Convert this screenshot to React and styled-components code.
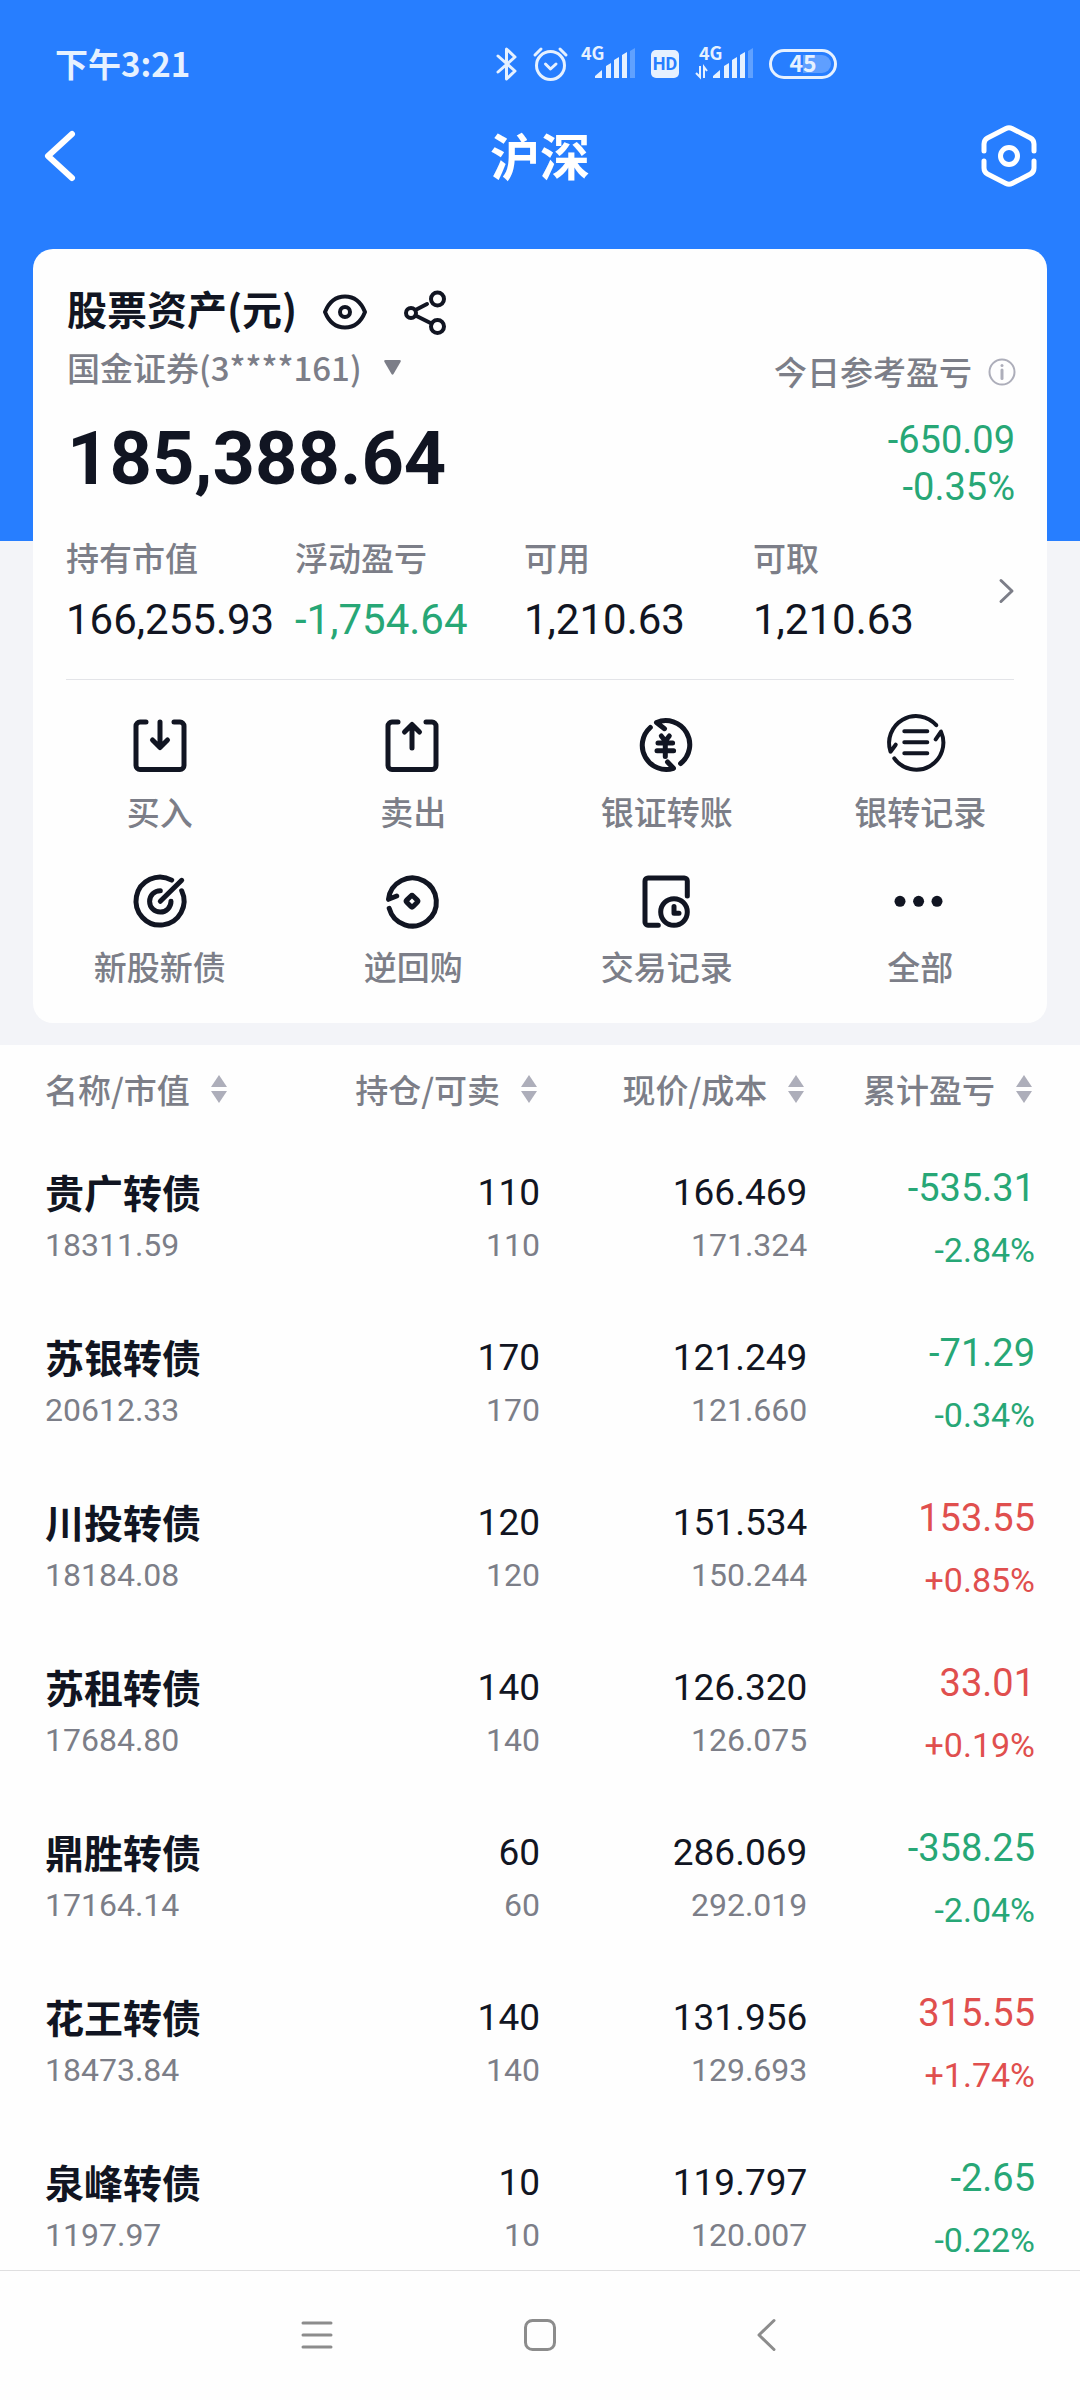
import React from "react";
import styled, { createGlobalStyle } from "styled-components";

const GlobalStyle = createGlobalStyle`
  * {
    box-sizing: border-box;
  }

  body {
    margin: 0;
    background: #fefefe;
    color: #111522;
    font-family: "Noto Sans CJK SC", sans-serif;
    font-size: 33px;
  }

  button,
  select {
    margin: 0;
    padding: 0;
    border: none;
    background: none;
    color: inherit;
    font: inherit;
  }

  svg {
    display: block;
    flex: none;
    overflow: visible;
  }
`;

const tones = {
  up: "#e04f4e",
  down: "#27a776",
  dark: "#111522",
  grey: "#7c7e88",
};

const Page = styled.div`
  display: flex;
  flex-direction: column;
  height: 100vh;
`;

const Top = styled.header`
  padding-bottom: 22px;
  background: linear-gradient(#277eff 541px, #f3f4f8 541px);
`;

const StatusBar = styled.div`
  display: flex;
  justify-content: space-between;
  align-items: center;
  height: 126px;
  padding: 0 243px 0 55px;
  color: #e6f1ff;
`;

const Clock = styled.span`
  font-size: 33px;
  font-weight: 700;
`;

const StatusIcons = styled.div`
  display: flex;
  align-items: center;
  gap: 16px;
  padding-top: 2px;
`;

const TitleBar = styled.div`
  display: flex;
  justify-content: space-between;
  align-items: center;
  height: 60px;
  padding: 0 43px;
  margin-bottom: 63px;
  color: #fff;
`;

const Title = styled.h1`
  margin: 0;
  padding-bottom: 4px;
  font-size: 50px;
  font-weight: 700;
  line-height: 60px;
`;

const TitleButton = styled.button`
  display: flex;
  justify-content: ${(props) => (props.$end ? "flex-end" : "flex-start")};
  width: 60px;
`;

const Card = styled.section`
  margin: 0 33px;
  border-radius: 20px;
  background: #fefefe;
`;

const Overview = styled.div`
  display: flex;
  justify-content: space-between;
  align-items: flex-end;
  padding: 34px 32px 0 34px;
`;

const Assets = styled.div`
  padding-bottom: 12px;
`;

const AssetsHead = styled.div`
  display: flex;
  align-items: center;
  height: 54px;
  gap: 26px;
`;

const AssetsTitle = styled.h2`
  margin: 0;
  padding-bottom: 4px;
  font-size: 40px;
  font-weight: 700;
  line-height: 50px;
`;

const IconButton = styled.button`
  display: flex;
  margin-right: 10px;
`;

const Account = styled.label`
  display: flex;
  align-items: center;
  gap: 22px;
  margin-top: 8px;
  color: ${tones.grey};
`;

const AccountSelect = styled.select`
  appearance: none;
  height: 44px;
  font-weight: 500;
  line-height: 44px;
`;

const Total = styled.div`
  margin-top: 30px;
  font-family: Roboto, sans-serif;
  font-size: 74px;
  font-weight: 700;
  line-height: 80px;
`;

const Today = styled.div`
  display: flex;
  flex-direction: column;
  align-items: flex-end;
`;

const TodayLabel = styled.div`
  display: flex;
  align-items: center;
  gap: 15px;
  margin-bottom: 26px;
  color: ${tones.grey};
  font-weight: 500;
  line-height: 40px;
`;

const TodayValue = styled.div`
  color: ${tones.down};
  font-family: Roboto, sans-serif;
  font-size: 38px;
  line-height: 47px;
`;

const Metrics = styled.div`
  display: flex;
  align-items: center;
  margin: 26px 33px 0;
  padding-bottom: 34px;
  border-bottom: 1px solid #e3e4e8;
`;

const MetricList = styled.dl`
  display: grid;
  grid-template-columns: repeat(4, 1fr);
  flex: 1;
  margin: 0;
`;

const MetricLabel = styled.dt`
  margin-bottom: 18px;
  color: ${tones.grey};
  font-weight: 500;
  line-height: 40px;
`;

const MetricValue = styled.dd`
  margin: 0;
  color: ${(props) => tones[props.$tone]};
  font-family: Roboto, sans-serif;
  font-size: 42px;
  line-height: 50px;
`;

const Actions = styled.nav`
  display: grid;
  grid-template-columns: repeat(4, 1fr);
  row-gap: 40px;
  padding: 36px 0 37px;
`;

const Action = styled.button`
  display: flex;
  flex-direction: column;
  align-items: center;
  gap: 15px;
  color: ${tones.dark};
`;

const ActionLabel = styled.span`
  color: ${tones.grey};
  font-weight: 500;
  line-height: 40px;
`;

const Holdings = styled.main`
  flex: 1;
  min-height: 0;
  overflow: hidden auto;
  padding: 0 45px;
  scrollbar-width: none;
`;

const Table = styled.table`
  width: 100%;
  table-layout: fixed;
  border-collapse: collapse;
`;

const HeadCell = styled.th`
  width: ${(props) => props.$width};
  height: 91px;
  padding: 0 0 4px;
  color: ${tones.grey};
  font-weight: 500;
  text-align: ${(props) => props.$align};
`;

const SortButton = styled.button`
  display: inline-flex;
  align-items: center;
  gap: 20px;
  line-height: 44px;
  white-space: nowrap;
`;

const Cell = styled.td`
  height: 165px;
  padding: 0;
  text-align: ${(props) => props.$align || "right"};
`;

const Name = styled.div`
  margin-bottom: 4px;
  font-size: 39px;
  font-weight: 700;
  line-height: 48px;
`;

const Main = styled.div`
  color: ${(props) => tones[props.$tone || "dark"]};
  font-family: Roboto, sans-serif;
  font-size: ${(props) => (props.$tone ? "38px" : "37px")};
  line-height: ${(props) => (props.$tone ? "62px" : "52px")};
`;

const Sub = styled.div`
  color: ${(props) => tones[props.$tone || "grey"]};
  font-family: Roboto, sans-serif;
  font-size: ${(props) => (props.$tone ? "34px" : "32px")};
  line-height: ${(props) => (props.$tone ? "62px" : "52px")};
`;

const SystemNav = styled.nav`
  display: flex;
  justify-content: center;
  height: 130px;
  padding-bottom: 2px;
  border-top: 1px solid #dfdfe0;
  color: #8c8c8c;
`;

const SystemButton = styled.button`
  display: flex;
  justify-content: center;
  align-items: center;
  width: 225px;
`;

const metrics = [
  { label: "持有市值", value: "166,255.93", tone: "dark" },
  { label: "浮动盈亏", value: "-1,754.64", tone: "down" },
  { label: "可用", value: "1,210.63", tone: "dark" },
  { label: "可取", value: "1,210.63", tone: "dark" },
];

const actions = [
  {
    label: "买入",
    icon: (
      <>
        <path d="M16 6H10a4 4 0 0 0-4 4V49.500a4 4 0 0 0 4 4H50a4 4 0 0 0 4-4V10a4 4 0 0 0-4-4H44" />
        <path d="M30 6V31M22.500 24 30 31.500 37.500 24" />
      </>
    ),
  },
  {
    label: "卖出",
    icon: (
      <>
        <path d="M15 6H9a4 4 0 0 0-4 4V49.500a4 4 0 0 0 4 4H49a4 4 0 0 0 4-4V10a4 4 0 0 0-4-4H43" />
        <path d="M29 32V9M21.500 16 29 8.500 36.500 16" />
      </>
    ),
  },
  {
    label: "银证转账",
    icon: (
      <>
        <path d="M13.300 11.500A24 24 0 0 0 36.500 52.300L30.500 46" />
        <path d="M27.500 12.700 19.500 6.500A24 24 0 0 1 43.600 47.500" />
        <path d="M24.300 20 28.300 25 32.300 20M21 27H35.600M20 34.700H36.600M28.300 25V40.500" />
      </>
    ),
  },
  {
    label: "银转记录",
    icon: (
      <g strokeWidth="4">
        <path d="M46.300 9.200A27 27 0 0 0 .500 35.700L5.700 28.700" />
        <path d="M4.300 42.300A27 27 0 0 0 51 15.700L45.700 23.300" />
        <path d="M14.300 15.300H37.300M14.300 26.300H37.300M14.300 37.300H37.300" />
      </g>
    ),
  },
  {
    label: "新股新债",
    icon: (
      <>
        <path d="M41.700 9.100A24 24 0 1 0 51.700 19.800" />
        <path d="M30.300 19.700A10.700 10.700 0 1 0 41 30.300" />
        <path d="M30.300 30.300 51.700 9.300" />
      </>
    ),
  },
  {
    label: "逆回购",
    icon: (
      <>
        <path d="M13.700 25 5.500 28.300A24 24 0 1 1 6.200 37.300" />
        <rect x="24.500" y="25.700" width="9" height="9" rx="1.500" transform="rotate(45 29 30.200)" />
      </>
    ),
  },
  {
    label: "交易记录",
    icon: (
      <>
        <path d="M21.300 54.200H11a3 3 0 0 1-3-3V10a3 3 0 0 1 3-3H47.300a3 3 0 0 1 3 3V25" />
        <circle cx="37" cy="41" r="13.300" />
        <path d="M37 35.500V42.300H42" />
      </>
    ),
  },
  {
    label: "全部",
    icon: (
      <g fill="currentColor" stroke="none">
        <circle cx="10" cy="30.300" r="5.500" />
        <circle cx="28.600" cy="30.300" r="5.500" />
        <circle cx="47" cy="30.300" r="5.500" />
      </g>
    ),
  },
];

const columns = [
  { label: "名称/市值", width: "25%", align: "left" },
  { label: "持仓/可卖", width: "25%", align: "right" },
  { label: "现价/成本", width: "27%", align: "right" },
  { label: "累计盈亏", width: "23%", align: "right" },
];

const holdings = [
  { name: "贵广转债", value: "18311.59", count: "110", price: "166.469", cost: "171.324", profit: "-535.31", rate: "-2.84%" },
  { name: "苏银转债", value: "20612.33", count: "170", price: "121.249", cost: "121.660", profit: "-71.29", rate: "-0.34%" },
  { name: "川投转债", value: "18184.08", count: "120", price: "151.534", cost: "150.244", profit: "153.55", rate: "+0.85%" },
  { name: "苏租转债", value: "17684.80", count: "140", price: "126.320", cost: "126.075", profit: "33.01", rate: "+0.19%" },
  { name: "鼎胜转债", value: "17164.14", count: "60", price: "286.069", cost: "292.019", profit: "-358.25", rate: "-2.04%" },
  { name: "花王转债", value: "18473.84", count: "140", price: "131.956", cost: "129.693", profit: "315.55", rate: "+1.74%" },
  { name: "泉峰转债", value: "1197.97", count: "10", price: "119.797", cost: "120.007", profit: "-2.65", rate: "-0.22%" },
];

const Line = ({ width, height, stroke = 5, children }) => (
  <svg
    width={width}
    height={height}
    viewBox={`0 0 ${width} ${height}`}
    fill="none"
    stroke="currentColor"
    strokeWidth={stroke}
    strokeLinecap="round"
    strokeLinejoin="round"
    aria-hidden="true"
  >
    {children}
  </svg>
);

// mobile signal: "4G" over five rising bars, the last one dimmed
const Signal = ({ arrows }) => (
  <svg width={arrows ? 58 : 51} height="34" viewBox={arrows ? "-4 0 58 34" : "3 0 51 34"} fill="currentColor">
    <text x="0" y="13" fontFamily="Noto Sans CJK SC" fontSize="18" fontWeight="700">
      4G
    </text>
    <path d="M14 31V29L21 23V31ZM25 31V19L30 16V31ZM33 31V13L38 10V31ZM41 31V8L46 5V31Z" />
    <path d="M49 31V4L54 1V31Z" opacity="0.3" />
    {arrows && (
      <path d="M-3 26 1 30V19M5 31V20L8 24" fill="none" stroke="currentColor" strokeWidth="2" />
    )}
  </svg>
);

const SortIcon = () => (
  <svg width="20" height="28" viewBox="0 0 20 28" fill="#adaeba" aria-hidden="true">
    <path d="M9 0 17 12H1Z" />
    <path d="M1 16H17L9 28Z" />
  </svg>
);

function Status() {
  return (
    <StatusBar>
      <Clock>下午3:21</Clock>
      <StatusIcons>
        <Line width={21} height={34} stroke={3}>
          <path d="M2 9 19 24 10.500 32V2L19 10 2 25" />
        </Line>
        <Line width={35} height={34} stroke={3}>
          <circle cx="17.500" cy="18.500" r="14" />
          <path d="M2 8 8 2M33 8 27 2M12.500 17 17.500 22 23 17" />
        </Line>
        <Signal />
        <svg width="28" height="28" viewBox="0 0 28 28">
          <rect width="28" height="28" rx="5" fill="#e6f1ff" />
          <text x="14" y="20" textAnchor="middle" fontFamily="Roboto" fontSize="18" fontWeight="700" fill="#277eff">
            HD
          </text>
        </svg>
        <Signal arrows />
        <svg width="68" height="30" viewBox="0 0 68 30">
          <path d="M34 6H53a9 9 0 0 1 0 18H34Z" fill="#5f9fff" />
          <rect x="1.500" y="1.500" width="65" height="27" rx="13.500" fill="none" stroke="currentColor" strokeWidth="3" />
          <text x="34" y="23" textAnchor="middle" fontFamily="Noto Sans CJK SC" fontSize="23" fontWeight="700" fill="currentColor">
            45
          </text>
        </svg>
      </StatusIcons>
    </StatusBar>
  );
}

function SummaryCard() {
  return (
    <Card>
      <Overview>
        <Assets>
          <AssetsHead>
            <AssetsTitle>股票资产(元)</AssetsTitle>
            <IconButton aria-label="显示或隐藏">
              <Line width={44} height={36} stroke={4}>
                <path d="M2 20C6 10 13 4.500 22 4.500S38 10 42 20C38 30 31 35.500 22 35.500S6 30 2 20Z" />
                <circle cx="22" cy="20" r="5" />
              </Line>
            </IconButton>
            <IconButton aria-label="分享">
              <Line width={44} height={44} stroke={4}>
                <circle cx="8" cy="25" r="5" />
                <circle cx="34.500" cy="11" r="6.500" />
                <circle cx="34.500" cy="38.500" r="6.500" />
                <path d="M12.500 22 24 16M12.500 27.500 28.500 35.500" />
              </Line>
            </IconButton>
          </AssetsHead>
          <Account>
            <AccountSelect aria-label="账户">
              <option>国金证券(3****161)</option>
            </AccountSelect>
            <svg width="17" height="15" viewBox="0 0 17 15" fill="currentColor" aria-hidden="true">
              <path d="M1.500 0H15.500Q17.500 0 16.500 2L9.500 14Q8.500 15.500 7.500 14L.500 2Q-.500 0 1.500 0Z" />
            </svg>
          </Account>
          <Total>185,388.64</Total>
        </Assets>
        <Today>
          <TodayLabel>
            今日参考盈亏
            <Line width={28} height={28} stroke={2}>
              <g stroke="#adaeba">
                <circle cx="15" cy="15" r="12.500" />
                <path d="M15 13V21.500" strokeWidth="3" />
                <path d="M15 8.500V8.600" strokeWidth="3" />
              </g>
            </Line>
          </TodayLabel>
          <TodayValue>-650.09</TodayValue>
          <TodayValue>-0.35%</TodayValue>
        </Today>
      </Overview>
      <Metrics>
        <MetricList>
          {metrics.map((metric) => (
            <div key={metric.label}>
              <MetricLabel>{metric.label}</MetricLabel>
              <MetricValue $tone={metric.tone}>{metric.value}</MetricValue>
            </div>
          ))}
        </MetricList>
        <button aria-label="资产详情">
          <Line width={32} height={24} stroke={3}>
            <path d="M19 1.500 30 12 19 22.500" stroke={tones.grey} />
          </Line>
        </button>
      </Metrics>
      <Actions>
        {actions.map((action) => (
          <Action key={action.label}>
            <Line width={60} height={60}>
              {action.icon}
            </Line>
            <ActionLabel>{action.label}</ActionLabel>
          </Action>
        ))}
      </Actions>
    </Card>
  );
}

function HoldingRow({ holding }) {
  const tone = holding.profit.startsWith("-") ? "down" : "up";

  return (
    <tr>
      <Cell $align="left">
        <Name>{holding.name}</Name>
        <Sub>{holding.value}</Sub>
      </Cell>
      <Cell>
        <Main>{holding.count}</Main>
        <Sub>{holding.count}</Sub>
      </Cell>
      <Cell>
        <Main>{holding.price}</Main>
        <Sub>{holding.cost}</Sub>
      </Cell>
      <Cell>
        <Main $tone={tone}>{holding.profit}</Main>
        <Sub $tone={tone}>{holding.rate}</Sub>
      </Cell>
    </tr>
  );
}

function App() {
  return (
    <Page>
      <GlobalStyle />
      <Top>
        <Status />
        <TitleBar>
          <TitleButton aria-label="返回">
            <Line width={32} height={50} stroke={6}>
              <path d="M29 3 5 25 29 47" />
            </Line>
          </TitleButton>
          <Title>沪深</Title>
          <TitleButton $end aria-label="设置">
            <Line width={56} height={62}>
              <path d="M3 26V19Q3 15 6.500 13L25 3.500Q28 2 31 3.500L49.500 13Q53 15 53 19V26" />
              <path d="M3 36V43Q3 47 6.500 49L25 58.500Q28 60 31 58.500L49.500 49Q53 47 53 43V36" />
              <circle cx="28" cy="31" r="8.500" />
            </Line>
          </TitleButton>
        </TitleBar>
        <SummaryCard />
      </Top>
      <Holdings>
        <Table>
          <thead>
            <tr>
              {columns.map((column) => (
                <HeadCell key={column.label} $width={column.width} $align={column.align}>
                  <SortButton>
                    {column.label}
                    <SortIcon />
                  </SortButton>
                </HeadCell>
              ))}
            </tr>
          </thead>
          <tbody>
            {holdings.map((holding) => (
              <HoldingRow key={holding.name} holding={holding} />
            ))}
          </tbody>
        </Table>
      </Holdings>
      <SystemNav>
        <SystemButton aria-label="最近任务">
          <Line width={30} height={32} stroke={3}>
            <path d="M3 4H31M3 16H31M3 28H31" />
          </Line>
        </SystemButton>
        <SystemButton aria-label="主屏幕">
          <Line width={32} height={32} stroke={3}>
            <rect x="1.500" y="1.500" width="29" height="29" rx="7" />
          </Line>
        </SystemButton>
        <SystemButton aria-label="返回上一页">
          <Line width={18} height={32} stroke={3}>
            <path d="M18 1.500 3 16 18 30.500" />
          </Line>
        </SystemButton>
      </SystemNav>
    </Page>
  );
}

export default App;
